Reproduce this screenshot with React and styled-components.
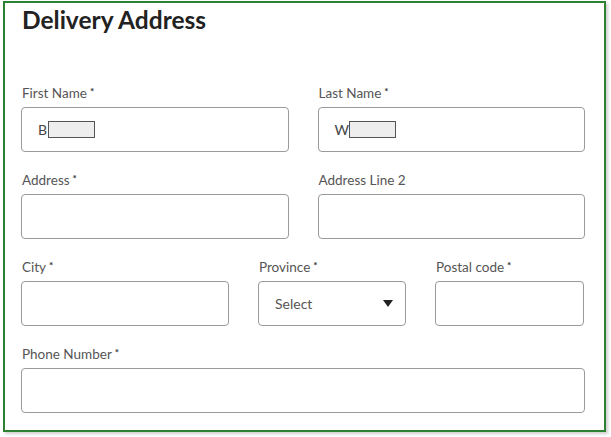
import React from 'react';
import styled, { createGlobalStyle } from 'styled-components';

const GlobalStyle = createGlobalStyle`
  * {
    box-sizing: border-box;
  }

  body {
    margin: 0;
    background: #ffffff;
    font-family: 'Lato', 'Liberation Sans', sans-serif;
  }
`;

const Page = styled.div`
  padding: 1px 5px 5px 3px;
`;

const Card = styled.section`
  width: 603px;
  height: 431px;
  padding: 3px 19px 0 16px;
  background: #ffffff;
  border: 2px solid #2c8232;
  box-shadow: 2px 2px 3px rgba(0, 0, 0, 0.2);
`;

const Title = styled.h2`
  margin: 0 0 51px 1px;
  font-size: 24.5px;
  line-height: 28px;
  font-weight: 700;
  color: #222222;
`;

const Form = styled.div`
  display: flex;
  flex-direction: column;
  gap: 20px;
`;

const Row = styled.div`
  display: grid;
  grid-template-columns: ${props => props.columns || '1fr 1fr'};
  column-gap: 29px;
`;

const Field = styled.div`
  display: flex;
  flex-direction: column;
  gap: 4px;
`;

const Label = styled.label`
  padding-left: 1px;
  font-size: 13.5px;
  line-height: 16px;
  margin-bottom: 2px;
  color: #555555;

  sup {
    margin-left: 3px;
    font-size: 10px;
    font-weight: 700;
    color: #333333;
    vertical-align: 3px;
    line-height: 0;
  }
`;

const Box = styled.div`
  display: flex;
  align-items: center;
  height: 45px;
  padding: 0 16px;
  border: 1px solid #9a9a9a;
  border-radius: 4px;
  font-size: 14px;
  color: #444444;
`;

const Redacted = styled.span`
  display: inline-block;
  width: 47px;
  height: 17px;
  margin-left: ${props => props.offset || 0}px;
  background: #eeeeee;
  border: 1px solid #555555;
`;

const SelectBox = styled(Box)`
  justify-content: space-between;
  padding-right: 12px;
  color: #555555;
`;

const Required = () => <sup>*</sup>;

const TextField = ({ label, required, children }) => (
  <Field>
    <Label>
      {label}
      {required && <Required />}
    </Label>
    <Box>{children}</Box>
  </Field>
);

const App = () => {
  return (
    <Page>
      <GlobalStyle />
      <Card>
        <Title>Delivery Address</Title>
        <Form>
          <Row>
            <TextField label="First Name" required>
              B
              <Redacted offset={1} />
            </TextField>
            <TextField label="Last Name" required>
              W
              <Redacted />
            </TextField>
          </Row>
          <Row>
            <TextField label="Address" required />
            <TextField label="Address Line 2" />
          </Row>
          <Row columns="208px 148px 149px">
            <TextField label="City" required />
            <Field>
              <Label>
                Province
                <Required />
              </Label>
              <SelectBox>
                Select
                <svg width="10" height="7" viewBox="0 0 10 7">
                  <path d="M0 0h10L5 7z" fill="#222222" />
                </svg>
              </SelectBox>
            </Field>
            <TextField label="Postal code" required />
          </Row>
          <Row columns="1fr">
            <TextField label="Phone Number" required />
          </Row>
        </Form>
      </Card>
    </Page>
  );
};

export default App;
